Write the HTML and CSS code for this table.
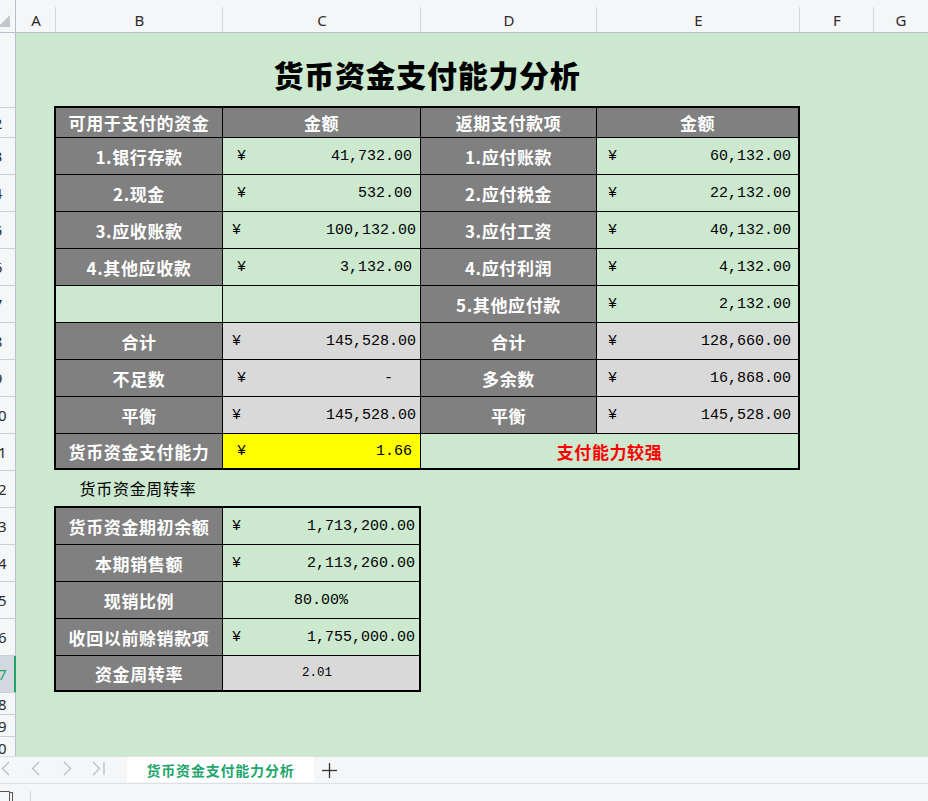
FILE: index.html
```html
<!DOCTYPE html>
<html lang="zh-CN">
<head>
<meta charset="utf-8">
<title>货币资金支付能力分析</title>
<link rel="stylesheet" href="styles.css">
</head>
<body>
<div class="app">
  <div class="colhead">
    <div class="corner">
      <svg width="15" height="32" viewBox="0 0 15 32"><polygon points="10,15 10,27 -2,27" fill="#c3c6cc"/></svg>
    </div>
    <div class="ch w-a">A</div>
    <div class="ch w-b">B</div>
    <div class="ch w-c">C</div>
    <div class="ch w-d">D</div>
    <div class="ch w-e">E</div>
    <div class="ch w-f">F</div>
    <div class="ch w-g">G</div>
  </div>

  <div class="body">
    <div class="rowhead">
      <div class="rh r-title"><span>1</span></div>
      <div class="rh r-head"><span>2</span></div>
      <div class="rh r-std"><span>3</span></div>
      <div class="rh r-std"><span>4</span></div>
      <div class="rh r-std"><span>5</span></div>
      <div class="rh r-std"><span>6</span></div>
      <div class="rh r-std"><span>7</span></div>
      <div class="rh r-std"><span>8</span></div>
      <div class="rh r-std"><span>9</span></div>
      <div class="rh r-std"><span>10</span></div>
      <div class="rh r-std"><span>11</span></div>
      <div class="rh r-std"><span>12</span></div>
      <div class="rh r-std"><span>13</span></div>
      <div class="rh r-std"><span>14</span></div>
      <div class="rh r-std"><span>15</span></div>
      <div class="rh r-std"><span>16</span></div>
      <div class="rh r-std r-sel"><span>17</span></div>
      <div class="rh r-small"><span>18</span></div>
      <div class="rh r-small"><span>19</span></div>
      <div class="rh r-small"><span>20</span></div>
    </div>

    <div class="sheet">
      <div class="title">货币资金支付能力分析</div>

      <div class="grid t1">
        <div class="lbl">可用于支付的资金</div>
        <div class="lbl">金额</div>
        <div class="lbl">返期支付款项</div>
        <div class="lbl">金额</div>

        <div class="lbl">1.银行存款</div>
        <div class="val c"><span>¥</span><span>41,732.00</span></div>
        <div class="lbl">1.应付账款</div>
        <div class="val e"><span>¥</span><span>60,132.00</span></div>

        <div class="lbl">2.现金</div>
        <div class="val c"><span>¥</span><span>532.00</span></div>
        <div class="lbl">2.应付税金</div>
        <div class="val e"><span>¥</span><span>22,132.00</span></div>

        <div class="lbl">3.应收账款</div>
        <div class="val c tight"><span>¥</span><span>100,132.00</span></div>
        <div class="lbl">3.应付工资</div>
        <div class="val e"><span>¥</span><span>40,132.00</span></div>

        <div class="lbl">4.其他应收款</div>
        <div class="val c"><span>¥</span><span>3,132.00</span></div>
        <div class="lbl">4.应付利润</div>
        <div class="val e"><span>¥</span><span>4,132.00</span></div>

        <div class="blank"></div>
        <div class="blank"></div>
        <div class="lbl">5.其他应付款</div>
        <div class="val e"><span>¥</span><span>2,132.00</span></div>

        <div class="lbl">合计</div>
        <div class="val c tight sum"><span>¥</span><span>145,528.00</span></div>
        <div class="lbl">合计</div>
        <div class="val e sum"><span>¥</span><span>128,660.00</span></div>

        <div class="lbl">不足数</div>
        <div class="val c sum"><span>¥</span><span class="dash">-</span></div>
        <div class="lbl">多余数</div>
        <div class="val e sum"><span>¥</span><span>16,868.00</span></div>

        <div class="lbl">平衡</div>
        <div class="val c tight sum"><span>¥</span><span>145,528.00</span></div>
        <div class="lbl">平衡</div>
        <div class="val e sum"><span>¥</span><span>145,528.00</span></div>

        <div class="lbl">货币资金支付能力</div>
        <div class="val c hi"><span>¥</span><span>1.66</span></div>
        <div class="verdict">支付能力较强</div>
      </div>

      <div class="note">货币资金周转率</div>

      <div class="grid t2">
        <div class="lbl">货币资金期初余额</div>
        <div class="val c tight"><span>¥</span><span>1,713,200.00</span></div>

        <div class="lbl">本期销售额</div>
        <div class="val c tight"><span>¥</span><span>2,113,260.00</span></div>

        <div class="lbl">现销比例</div>
        <div class="val center"><span>80.00%</span></div>

        <div class="lbl">收回以前赊销款项</div>
        <div class="val c tight"><span>¥</span><span>1,755,000.00</span></div>

        <div class="lbl">资金周转率</div>
        <div class="val center small sum"><span>2.01</span></div>
      </div>
    </div>
  </div>

  <div class="tabbar">
    <svg class="nav" width="110" height="26" viewBox="0 0 110 26">
      <g fill="none" stroke="#b7bbc2" stroke-width="1.2">
        <polyline points="9,5 2.5,11.5 9,18"/>
        <polyline points="39,5 32.5,11.5 39,18"/>
        <polyline points="64,5 70.5,11.5 64,18"/>
        <polyline points="93,5 99.5,11.5 93,18"/>
        <line x1="104" y1="5" x2="104" y2="18"/>
      </g>
    </svg>
    <div class="tab">货币资金支付能力分析</div>
    <svg class="plus" width="16" height="16" viewBox="0 0 16 16">
      <g stroke="#333" stroke-width="1.3">
        <line x1="0" y1="7.5" x2="15" y2="7.5"/>
        <line x1="7.5" y1="0" x2="7.5" y2="15"/>
      </g>
    </svg>
  </div>

  <div class="status">
    <svg width="16" height="17" viewBox="0 0 16 17">
      <g fill="none" stroke="#555" stroke-width="1">
        <path d="M-2 7.5 H9.5 V17"/>
        <path d="M9.5 8.5 H12.5 V17"/>
      </g>
    </svg>
    <div class="sep"></div>
  </div>
</div>
</body>
</html>
```

FILE: styles.css
```css
* {
  box-sizing: border-box;
  margin: 0;
  padding: 0;
}

html, body {
  width: 928px;
  height: 801px;
  overflow: hidden;
}

body {
  font-family: "Noto Sans", "Noto Sans CJK SC", sans-serif;
  background: #f5f6f8;
  color: #000;
}

.app {
  display: flex;
  flex-direction: column;
  width: 928px;
  height: 801px;
}

/* ---------- column header ---------- */
.colhead {
  flex: none;
  display: flex;
  height: 33px;
  border-bottom: 1px solid #b8becb;
  background: #f5f6f8;
}

.corner {
  flex: none;
  width: 16px;
  border-right: 1px solid #b8becb;
}

.corner svg {
  display: block;
}

.ch {
  flex: none;
  height: 32px;
  padding-top: 7px;
  line-height: 26px;
  text-align: center;
  font-family: "Noto Sans", sans-serif;
  font-size: 15px;
  color: #2b2b2b;
  background: linear-gradient(#d3d7de, #d3d7de) no-repeat right 7px / 1px 25px;
}

.w-a { width: 40px; }
.w-b { width: 167px; }
.w-c { width: 198px; }
.w-d { width: 176px; }
.w-e { width: 203px; }
.w-f { width: 74px; }
.w-g { flex: 1; background: none; }

/* ---------- body ---------- */
.body {
  flex: none;
  height: 723px;
  display: flex;
  overflow: hidden;
}

.rowhead {
  flex: none;
  width: 16px;
  overflow: hidden;
  background: #f5f6f8;
}

.rh {
  display: flex;
  justify-content: flex-end;
  align-items: center;
  width: 16px;
  overflow: hidden;
  border-right: 1px solid #b8becb;
  border-bottom: 1px solid #c9cdd7;
  font-family: "Noto Sans", sans-serif;
  font-size: 15px;
  color: #2b2b2b;
}

.rh span {
  flex: none;
  width: 30px;
  margin-right: 2px;
  text-align: center;
}

.r-title { height: 75px; }
.r-head { height: 30px; }
.r-std { height: 37px; }
.r-small { height: 22px; }

.r-sel {
  background: #d3d8e0;
  border-right-color: #22a56c;
  box-shadow: inset -1px 0 0 #22a56c;
  color: #22a56c;
}

.sheet {
  flex: 1;
  background: #cce8cf;
  overflow: hidden;
}

.title {
  margin-left: 38px;
  width: 746px;
  height: 73px;
  padding-top: 8px;
  display: flex;
  align-items: center;
  justify-content: center;
  font-family: "Noto Sans CJK SC", sans-serif;
  font-weight: 900;
  font-size: 30px;
  letter-spacing: 0.7px;
  color: #000;
}

/* ---------- tables ---------- */
.grid {
  display: grid;
  gap: 1px;
  margin-left: 38px;
  background: #000;
  border: 2px solid #000;
}

.t1 {
  width: 746px;
  grid-template-columns: 166px 197px 175px 201px;
  grid-template-rows: 29px repeat(8, 36px) 34px;
}

.t2 {
  width: 367px;
  grid-template-columns: 166px 196px;
  grid-template-rows: repeat(4, 36px) 34px;
}

.lbl {
  display: flex;
  align-items: center;
  justify-content: center;
  background: #808080;
  color: #fff;
  font-family: "Noto Sans CJK SC", sans-serif;
  font-weight: 700;
  font-size: 17px;
  letter-spacing: 0.6px;
  white-space: nowrap;
}

.blank {
  background: #cce8cf;
}

.val {
  display: flex;
  align-items: center;
  justify-content: space-between;
  background: #cce8cf;
  font-family: "Liberation Mono", "DejaVu Sans Mono", monospace;
  font-size: 15px;
  color: #000;
  white-space: nowrap;
}

.val.c {
  padding: 0 8px 0 14px;
}

.val.c.tight {
  padding: 0 4px 0 9px;
}

.val.e {
  padding: 0 7px 0 11px;
}

.val.sum {
  background: #d9d9d9;
}

.val.hi {
  background: #ffff00;
}

.val .dash {
  margin-right: 19px;
}

.val.center {
  justify-content: center;
}

.val.small {
  font-size: 12.5px;
  padding-right: 8px;
}

.verdict {
  grid-column: span 2;
  display: flex;
  align-items: center;
  justify-content: center;
  background: #cce8cf;
  color: #ff0000;
  font-family: "Noto Sans CJK SC", sans-serif;
  font-weight: 700;
  font-size: 17px;
  letter-spacing: 0.6px;
}

.note {
  margin-left: 38px;
  width: 168px;
  height: 36px;
  display: flex;
  align-items: center;
  justify-content: center;
  font-family: "Noto Sans CJK SC", sans-serif;
  font-size: 16px;
  letter-spacing: 0.7px;
  color: #000;
}

/* ---------- sheet tabs ---------- */
.tabbar {
  flex: none;
  display: flex;
  align-items: flex-start;
  height: 27px;
  border-top: 1px solid #dcdfe5;
  background: #f5f6f8;
}

.tabbar .nav {
  display: block;
  flex: none;
}

.tab {
  flex: none;
  margin-left: 17px;
  width: 187px;
  height: 25px;
  display: flex;
  align-items: center;
  justify-content: center;
  background: #fff;
  color: #22a56c;
  font-family: "Noto Sans CJK SC", sans-serif;
  font-weight: 700;
  font-size: 14px;
  letter-spacing: 0.8px;
}

.plus {
  display: block;
  flex: none;
  margin-left: 8px;
  margin-top: 6px;
}

/* ---------- status bar ---------- */
.status {
  flex: none;
  height: 18px;
  display: flex;
  align-items: flex-end;
  border-top: 1px solid #dcdfe5;
  background: #f5f6f8;
}

.status svg {
  display: block;
  flex: none;
}

.status .sep {
  margin-left: 14px;
  width: 1px;
  height: 10px;
  background: #d3d6dc;
}
```
